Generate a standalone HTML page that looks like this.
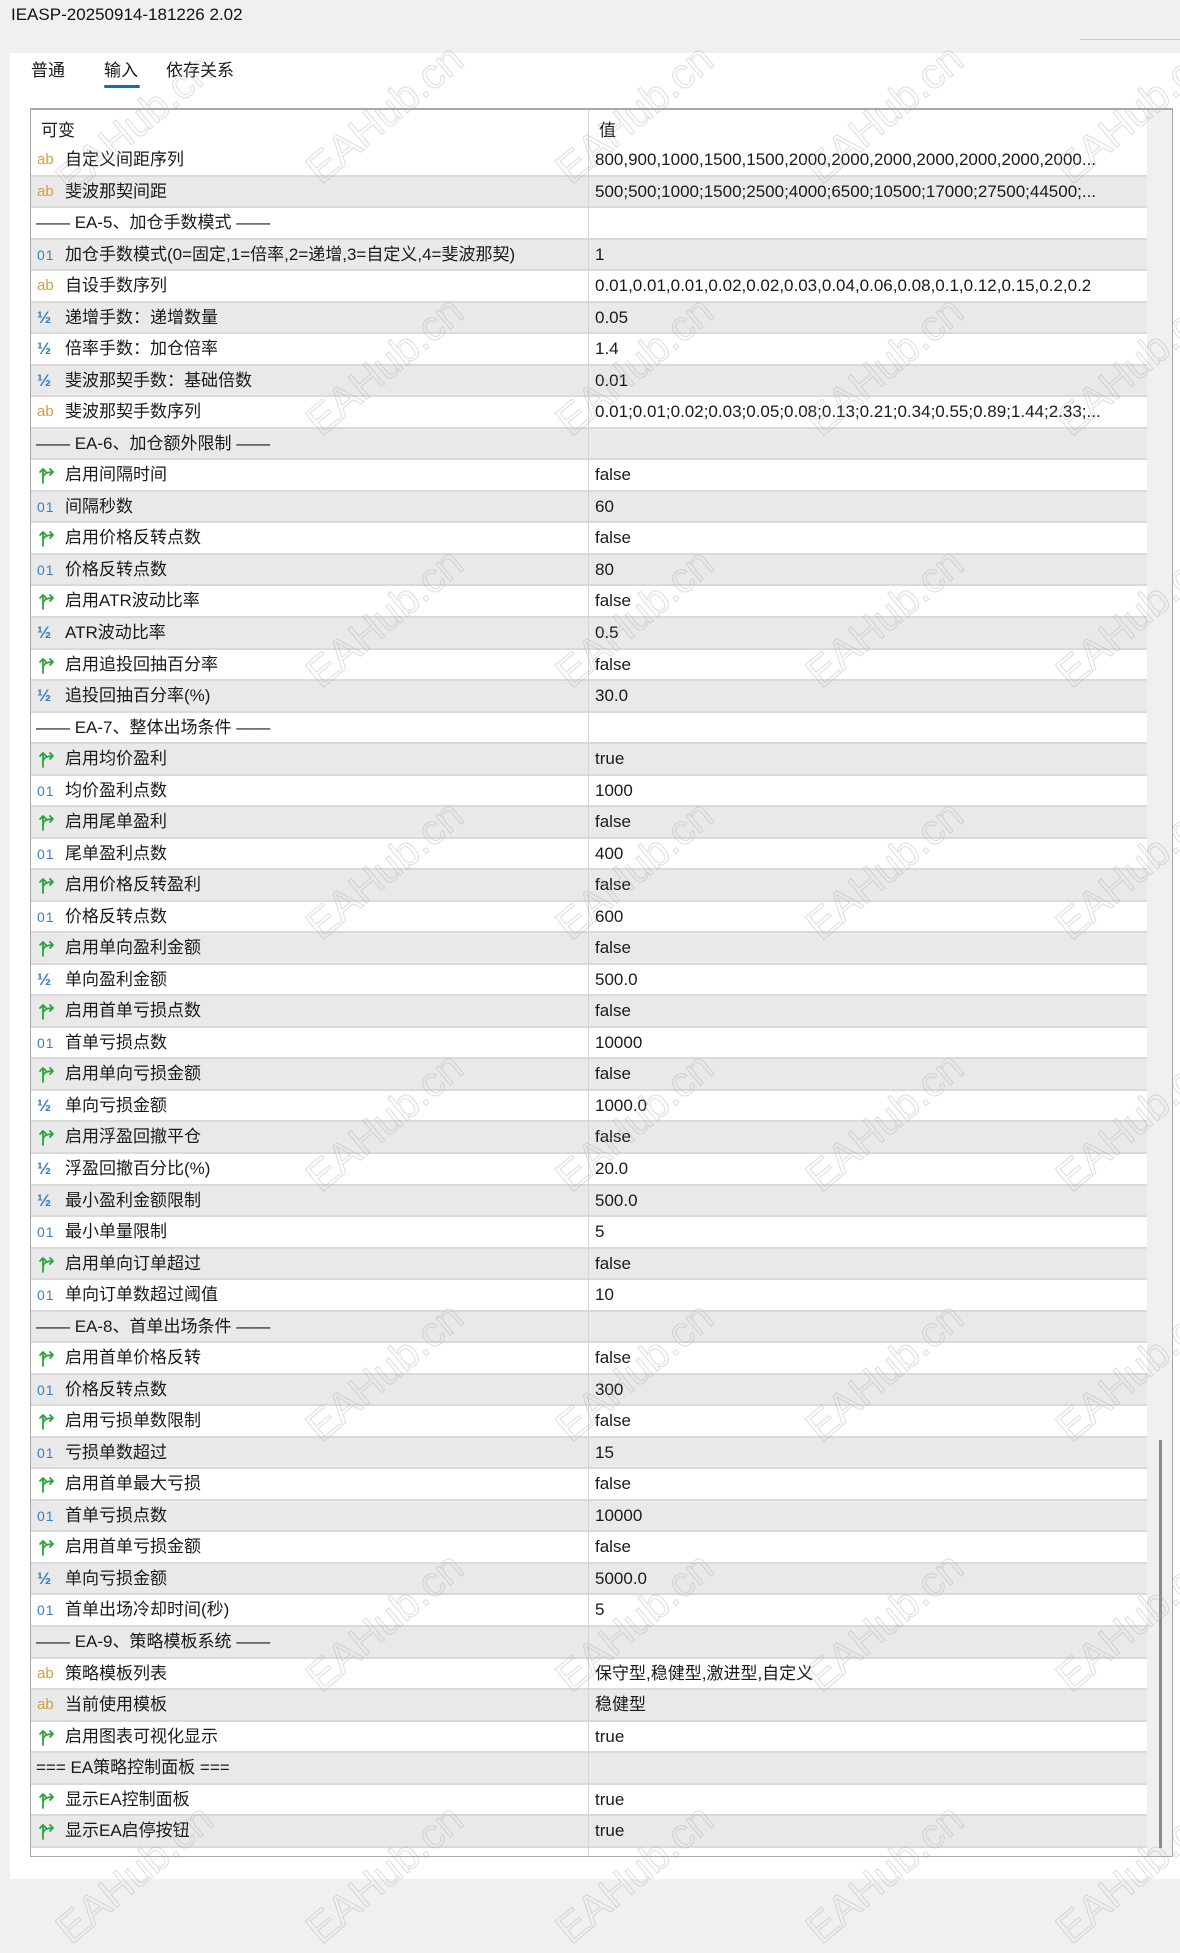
<!DOCTYPE html>
<html><head><meta charset="utf-8">
<style>
*{margin:0;padding:0;box-sizing:border-box}
html,body{width:1180px;height:1889px;overflow:hidden;background:#f0f0f0;font-family:"Liberation Sans","Noto Sans CJK SC",sans-serif;color:#1a1a1a}
.title{position:absolute;left:11px;top:5px;font-size:17px;color:#111}
.tline{position:absolute;left:1080px;top:39px;width:100px;height:1px;background:#c8c8c8}
.panel{position:absolute;left:10px;top:53px;width:1170px;height:1826px;background:#fff}
.tab{position:absolute;top:56px;font-size:17px}
.ul{position:absolute;left:104px;top:85px;width:36px;height:3px;background:#0a6cc4;border-radius:2px}
.tbl{position:absolute;left:30px;top:108px;width:1143px;height:1749px;border:1px solid #a8a8a8;border-top:2px solid #a8a8a8;background:#f0f0f0;overflow:hidden}
.hdr{position:absolute;left:0;top:0;width:1116px;height:35px;background:#fff;font-size:17px}
.rows{position:absolute;left:0;top:35px;width:1116px}
.r{height:31.54px;position:relative;background:#fff;border-bottom:2px solid #dadada;font-size:17px;white-space:nowrap}
.r.g{background:#e9e9e9}
.r span{position:absolute;top:0;line-height:30px;height:30px}
.r .n{left:34px}
.r .v{left:564px}
.r .s{left:5px}
.r .ic{left:6px;width:22px;font-size:15px}
svg.ic{position:absolute;left:6px;top:5px;width:20px;height:20px}
.ab{color:#d3a03a}
.o1{color:#3b7fc1;font-size:14px !important;letter-spacing:1px}
.h{color:#3b7fc1;font-size:17px !important;font-weight:bold}
.div{position:absolute;left:557px;top:0;width:1px;height:1760px;background:#d4d4d4}
.sb{position:absolute;left:1128px;top:1330px;width:3px;height:408px;background:#8a8a8a}
.wm{position:absolute;font-size:42px;font-family:"Liberation Sans",sans-serif;color:transparent;-webkit-text-stroke:1px rgba(170,170,170,.4);transform:rotate(-40deg);white-space:nowrap;pointer-events:none}
</style></head><body>
<div class="title">IEASP-20250914-181226 2.02</div>
<div class="tline"></div>
<div class="panel"></div>
<div class="tab" style="left:31px">普通</div>
<div class="tab" style="left:104px">输入</div>
<div class="tab" style="left:166px">依存关系</div>
<div class="ul"></div>
<svg width="0" height="0" style="position:absolute"><defs><symbol id="b" viewBox="0 0 20 20"><path d="M5 18V4M2 7l3-3 3 3M5 13c0-4 4-6 10-6M12 4l3 3-3 3" fill="none" stroke="#2aa53a" stroke-width="1.8" stroke-linecap="round" stroke-linejoin="round"/></symbol></defs></svg>
<div class="tbl">
<div class="hdr"><span style="position:absolute;left:10px;top:6px">可变</span><span style="position:absolute;left:568px;top:6px">值</span></div>
<div class="rows">
<div class="r"><span class="ic ab">ab</span><span class="n">自定义间距序列</span><span class="v">800,900,1000,1500,1500,2000,2000,2000,2000,2000,2000,2000...</span></div>
<div class="r g"><span class="ic ab">ab</span><span class="n">斐波那契间距</span><span class="v">500;500;1000;1500;2500;4000;6500;10500;17000;27500;44500;...</span></div>
<div class="r"><span class="s">—— EA-5、加仓手数模式 ——</span></div>
<div class="r g"><span class="ic o1">01</span><span class="n">加仓手数模式(0=固定,1=倍率,2=递增,3=自定义,4=斐波那契)</span><span class="v">1</span></div>
<div class="r"><span class="ic ab">ab</span><span class="n">自设手数序列</span><span class="v">0.01,0.01,0.01,0.02,0.02,0.03,0.04,0.06,0.08,0.1,0.12,0.15,0.2,0.2</span></div>
<div class="r g"><span class="ic h">½</span><span class="n">递增手数：递增数量</span><span class="v">0.05</span></div>
<div class="r"><span class="ic h">½</span><span class="n">倍率手数：加仓倍率</span><span class="v">1.4</span></div>
<div class="r g"><span class="ic h">½</span><span class="n">斐波那契手数：基础倍数</span><span class="v">0.01</span></div>
<div class="r"><span class="ic ab">ab</span><span class="n">斐波那契手数序列</span><span class="v">0.01;0.01;0.02;0.03;0.05;0.08;0.13;0.21;0.34;0.55;0.89;1.44;2.33;...</span></div>
<div class="r g"><span class="s">—— EA-6、加仓额外限制 ——</span></div>
<div class="r"><svg class="ic"><use href="#b"/></svg><span class="n">启用间隔时间</span><span class="v">false</span></div>
<div class="r g"><span class="ic o1">01</span><span class="n">间隔秒数</span><span class="v">60</span></div>
<div class="r"><svg class="ic"><use href="#b"/></svg><span class="n">启用价格反转点数</span><span class="v">false</span></div>
<div class="r g"><span class="ic o1">01</span><span class="n">价格反转点数</span><span class="v">80</span></div>
<div class="r"><svg class="ic"><use href="#b"/></svg><span class="n">启用ATR波动比率</span><span class="v">false</span></div>
<div class="r g"><span class="ic h">½</span><span class="n">ATR波动比率</span><span class="v">0.5</span></div>
<div class="r"><svg class="ic"><use href="#b"/></svg><span class="n">启用追投回抽百分率</span><span class="v">false</span></div>
<div class="r g"><span class="ic h">½</span><span class="n">追投回抽百分率(%)</span><span class="v">30.0</span></div>
<div class="r"><span class="s">—— EA-7、整体出场条件 ——</span></div>
<div class="r g"><svg class="ic"><use href="#b"/></svg><span class="n">启用均价盈利</span><span class="v">true</span></div>
<div class="r"><span class="ic o1">01</span><span class="n">均价盈利点数</span><span class="v">1000</span></div>
<div class="r g"><svg class="ic"><use href="#b"/></svg><span class="n">启用尾单盈利</span><span class="v">false</span></div>
<div class="r"><span class="ic o1">01</span><span class="n">尾单盈利点数</span><span class="v">400</span></div>
<div class="r g"><svg class="ic"><use href="#b"/></svg><span class="n">启用价格反转盈利</span><span class="v">false</span></div>
<div class="r"><span class="ic o1">01</span><span class="n">价格反转点数</span><span class="v">600</span></div>
<div class="r g"><svg class="ic"><use href="#b"/></svg><span class="n">启用单向盈利金额</span><span class="v">false</span></div>
<div class="r"><span class="ic h">½</span><span class="n">单向盈利金额</span><span class="v">500.0</span></div>
<div class="r g"><svg class="ic"><use href="#b"/></svg><span class="n">启用首单亏损点数</span><span class="v">false</span></div>
<div class="r"><span class="ic o1">01</span><span class="n">首单亏损点数</span><span class="v">10000</span></div>
<div class="r g"><svg class="ic"><use href="#b"/></svg><span class="n">启用单向亏损金额</span><span class="v">false</span></div>
<div class="r"><span class="ic h">½</span><span class="n">单向亏损金额</span><span class="v">1000.0</span></div>
<div class="r g"><svg class="ic"><use href="#b"/></svg><span class="n">启用浮盈回撤平仓</span><span class="v">false</span></div>
<div class="r"><span class="ic h">½</span><span class="n">浮盈回撤百分比(%)</span><span class="v">20.0</span></div>
<div class="r g"><span class="ic h">½</span><span class="n">最小盈利金额限制</span><span class="v">500.0</span></div>
<div class="r"><span class="ic o1">01</span><span class="n">最小单量限制</span><span class="v">5</span></div>
<div class="r g"><svg class="ic"><use href="#b"/></svg><span class="n">启用单向订单超过</span><span class="v">false</span></div>
<div class="r"><span class="ic o1">01</span><span class="n">单向订单数超过阈值</span><span class="v">10</span></div>
<div class="r g"><span class="s">—— EA-8、首单出场条件 ——</span></div>
<div class="r"><svg class="ic"><use href="#b"/></svg><span class="n">启用首单价格反转</span><span class="v">false</span></div>
<div class="r g"><span class="ic o1">01</span><span class="n">价格反转点数</span><span class="v">300</span></div>
<div class="r"><svg class="ic"><use href="#b"/></svg><span class="n">启用亏损单数限制</span><span class="v">false</span></div>
<div class="r g"><span class="ic o1">01</span><span class="n">亏损单数超过</span><span class="v">15</span></div>
<div class="r"><svg class="ic"><use href="#b"/></svg><span class="n">启用首单最大亏损</span><span class="v">false</span></div>
<div class="r g"><span class="ic o1">01</span><span class="n">首单亏损点数</span><span class="v">10000</span></div>
<div class="r"><svg class="ic"><use href="#b"/></svg><span class="n">启用首单亏损金额</span><span class="v">false</span></div>
<div class="r g"><span class="ic h">½</span><span class="n">单向亏损金额</span><span class="v">5000.0</span></div>
<div class="r"><span class="ic o1">01</span><span class="n">首单出场冷却时间(秒)</span><span class="v">5</span></div>
<div class="r g"><span class="s">—— EA-9、策略模板系统 ——</span></div>
<div class="r"><span class="ic ab">ab</span><span class="n">策略模板列表</span><span class="v">保守型,稳健型,激进型,自定义</span></div>
<div class="r g"><span class="ic ab">ab</span><span class="n">当前使用模板</span><span class="v">稳健型</span></div>
<div class="r"><svg class="ic"><use href="#b"/></svg><span class="n">启用图表可视化显示</span><span class="v">true</span></div>
<div class="r g"><span class="s">=== EA策略控制面板 ===</span></div>
<div class="r"><svg class="ic"><use href="#b"/></svg><span class="n">显示EA控制面板</span><span class="v">true</span></div>
<div class="r g"><svg class="ic"><use href="#b"/></svg><span class="n">显示EA启停按钮</span><span class="v">true</span></div>
<div class="r"><svg class="ic"><use href="#b"/></svg></div>
</div>
<div class="div"></div>
<div class="sb"></div>
</div>
<div class="wm" style="left:40px;top:100px">EAHub.cn</div>
<div class="wm" style="left:290px;top:90px">EAHub.cn</div>
<div class="wm" style="left:540px;top:90px">EAHub.cn</div>
<div class="wm" style="left:790px;top:90px">EAHub.cn</div>
<div class="wm" style="left:1040px;top:90px">EAHub.cn</div>
<div class="wm" style="left:290px;top:342px">EAHub.cn</div>
<div class="wm" style="left:540px;top:342px">EAHub.cn</div>
<div class="wm" style="left:790px;top:342px">EAHub.cn</div>
<div class="wm" style="left:1040px;top:342px">EAHub.cn</div>
<div class="wm" style="left:290px;top:594px">EAHub.cn</div>
<div class="wm" style="left:540px;top:594px">EAHub.cn</div>
<div class="wm" style="left:790px;top:594px">EAHub.cn</div>
<div class="wm" style="left:1040px;top:594px">EAHub.cn</div>
<div class="wm" style="left:290px;top:846px">EAHub.cn</div>
<div class="wm" style="left:540px;top:846px">EAHub.cn</div>
<div class="wm" style="left:790px;top:846px">EAHub.cn</div>
<div class="wm" style="left:1040px;top:846px">EAHub.cn</div>
<div class="wm" style="left:290px;top:1098px">EAHub.cn</div>
<div class="wm" style="left:540px;top:1098px">EAHub.cn</div>
<div class="wm" style="left:790px;top:1098px">EAHub.cn</div>
<div class="wm" style="left:1040px;top:1098px">EAHub.cn</div>
<div class="wm" style="left:290px;top:1348px">EAHub.cn</div>
<div class="wm" style="left:540px;top:1348px">EAHub.cn</div>
<div class="wm" style="left:790px;top:1348px">EAHub.cn</div>
<div class="wm" style="left:1040px;top:1348px">EAHub.cn</div>
<div class="wm" style="left:290px;top:1598px">EAHub.cn</div>
<div class="wm" style="left:540px;top:1598px">EAHub.cn</div>
<div class="wm" style="left:790px;top:1598px">EAHub.cn</div>
<div class="wm" style="left:1040px;top:1598px">EAHub.cn</div>
<div class="wm" style="left:40px;top:1850px">EAHub.cn</div>
<div class="wm" style="left:290px;top:1850px">EAHub.cn</div>
<div class="wm" style="left:540px;top:1850px">EAHub.cn</div>
<div class="wm" style="left:790px;top:1850px">EAHub.cn</div>
<div class="wm" style="left:1040px;top:1850px">EAHub.cn</div>
</body></html>
